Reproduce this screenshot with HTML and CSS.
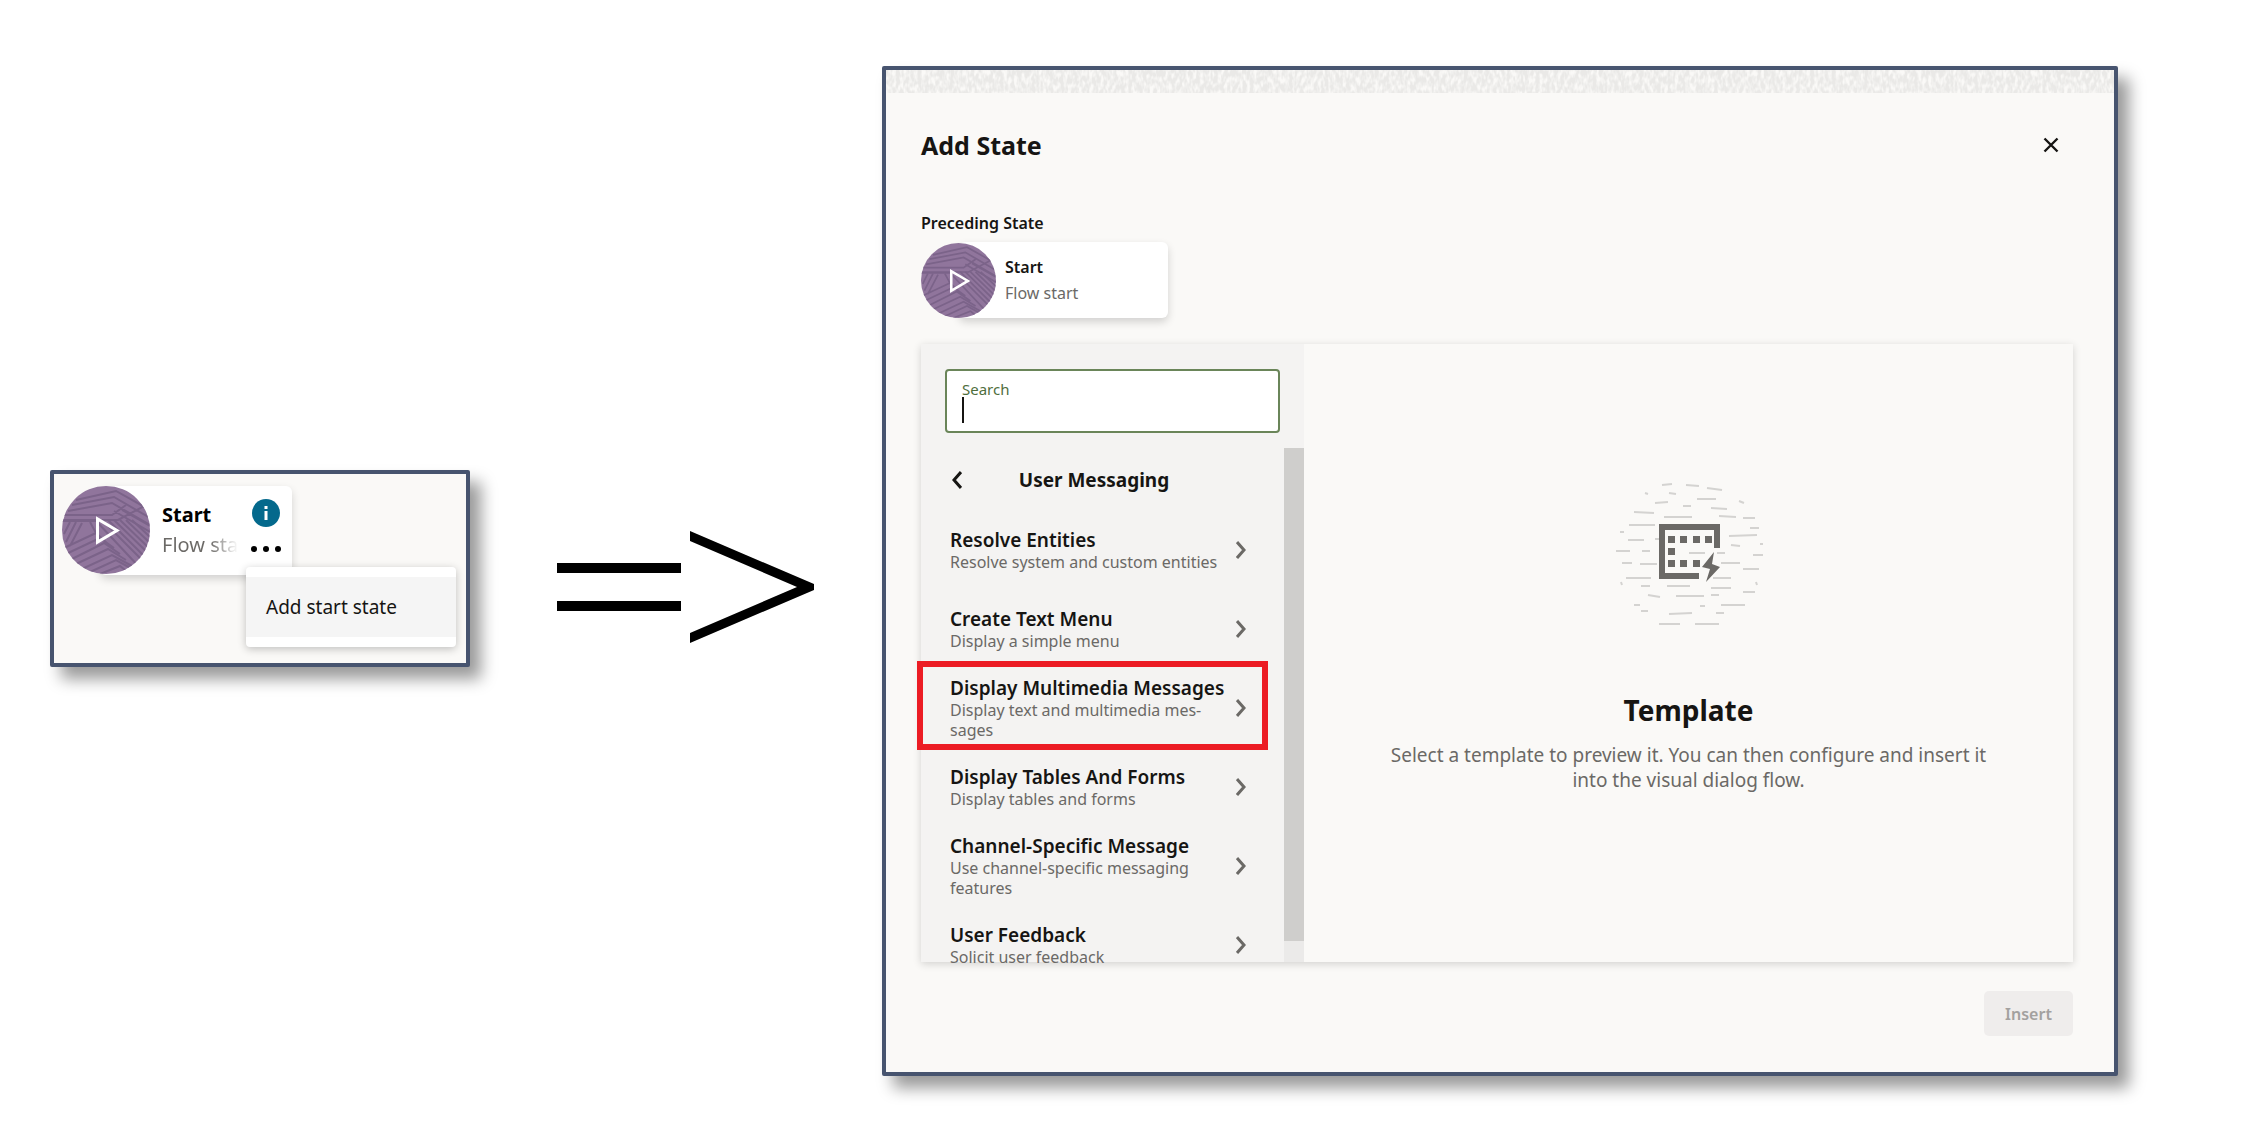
FILE: index.html
```html
<!DOCTYPE html>
<html lang="en">
<head>
<meta charset="utf-8">
<meta name="viewport" content="width=device-width, initial-scale=1">
<title>Add State</title>
<link rel="stylesheet" href="styles.css">
</head>
<body>
<svg class="defs" aria-hidden="true">
  <defs>
    <symbol id="start-icon" viewBox="0 0 88 88">
      <clipPath id="disc"><circle cx="44" cy="44" r="44"/></clipPath>
      <g clip-path="url(#disc)">
        <rect width="88" height="88" fill="#90759c"/>
        <g fill="none" stroke="#7b6389" stroke-width="2">
          <path d="M14 14L54 5L88 24M10 19L52 11L88 32M6 25L50 17L88 39M2 29H50L64 19M0 34H56L88 17M52 25L88 46M60 24L88 40"/>
          <path d="M40 34L88 82M46 34L88 76M52 34L88 69M58 34L88 63M64 34L88 57M70 34L88 51M36 37L80 84M0 35H40"/>
          <path d="M8 36L2 48M14 36L4 56M20 37L8 60M28 36L34 47M2 62L34 47L46 58M4 68L38 52L52 62M8 74L42 57L58 68M14 78L46 63L64 74M20 83L50 69L70 80M28 86L54 74L74 85M38 88L58 80L68 88"/>
        </g>
        <path d="M35.500 33V56L55 44.500Z" fill="none" stroke="#fff" stroke-width="3"/>
      </g>
    </symbol>
    <symbol id="chevron" viewBox="0 0 10 18">
      <path d="M1 1L8 9L1 17" fill="none" stroke="currentColor" stroke-width="3"/>
    </symbol>
  </defs>
</svg>

<main class="page">
  <section class="canvas frame" aria-label="Flow canvas">
    <article class="node node-large">
      <svg class="node-icon" aria-hidden="true"><use href="#start-icon"/></svg>
      <div class="node-text">
        <strong>Start</strong>
        <span class="fade">Flow start</span>
      </div>
      <div class="node-actions">
        <button class="icon-button" aria-label="Information">
          <svg width="28" height="28" viewBox="0 0 28 28"><circle cx="14" cy="14" r="14" fill="#04698c"/><path d="M12.500 7h3v3h-3zM12.500 12h3v9h-3z" fill="#fff"/></svg>
        </button>
        <button class="icon-button" aria-label="Menu">
          <svg width="30" height="8" viewBox="0 0 30 8"><circle cx="3" cy="4" r="3"/><circle cx="15" cy="4" r="3"/><circle cx="27" cy="4" r="3"/></svg>
        </button>
      </div>
    </article>
    <div class="menu" role="menu">
      <button class="menu-item" role="menuitem">Add start state</button>
    </div>
  </section>

  <svg class="arrow" viewBox="0 0 257 112" aria-hidden="true">
    <path d="M0 32H124V42H0ZM0 70H124V80H0ZM133 0L257 53V59L133 112V102L240 56L133 10Z"/>
  </svg>

  <section class="dialog frame" role="dialog" aria-labelledby="dialog-title">
    <svg class="texture" aria-hidden="true">
      <filter id="grain" x="0" y="0" width="100%" height="100%">
        <feTurbulence type="fractalNoise" baseFrequency="0.280 0.140" numOctaves="2" seed="4"/>
        <feColorMatrix values="0 0 0 0 0.820  0 0 0 0 0.815  0 0 0 0 0.800  3 0 0 0 -0.850"/>
      </filter>
      <rect width="100%" height="100%" filter="url(#grain)"/>
    </svg>
    <header class="dialog-header">
      <h1 id="dialog-title">Add State</h1>
      <button class="icon-button close" aria-label="Close">
        <svg width="16" height="16" viewBox="0 0 16 16"><path d="M1.500 1.500L14.500 14.500M14.500 1.500L1.500 14.500" fill="none" stroke="#161513" stroke-width="2.400"/></svg>
      </button>
    </header>
    <h2 class="preceding">Preceding State</h2>
    <article class="node">
      <svg class="node-icon" aria-hidden="true"><use href="#start-icon"/></svg>
      <div class="node-text">
        <strong>Start</strong>
        <span>Flow start</span>
      </div>
    </article>

    <div class="picker">
      <div class="templates">
        <div class="search">
          <label for="search">Search</label>
          <div class="search-line"><span class="caret"></span><input id="search" type="text"></div>
        </div>
        <div class="scroller">
          <nav class="list" aria-label="User Messaging">
            <div class="list-header">
              <button class="icon-button back" aria-label="Back"><svg class="chevron flip"><use href="#chevron"/></svg></button>
              <h3>User Messaging</h3>
            </div>
            <button class="item"><span class="item-text"><b>Resolve Entities</b><span>Resolve system and custom entities</span></span><svg class="chevron"><use href="#chevron"/></svg></button>
            <button class="item"><span class="item-text"><b>Create Text Menu</b><span>Display a simple menu</span></span><svg class="chevron"><use href="#chevron"/></svg></button>
            <button class="item highlighted"><span class="item-text"><b>Display Multimedia Messages</b><span>Display text and multimedia mes&shy;sages</span></span><svg class="chevron"><use href="#chevron"/></svg></button>
            <button class="item"><span class="item-text"><b>Display Tables And Forms</b><span>Display tables and forms</span></span><svg class="chevron"><use href="#chevron"/></svg></button>
            <button class="item"><span class="item-text"><b>Channel-Specific Message</b><span>Use channel-specific messaging features</span></span><svg class="chevron"><use href="#chevron"/></svg></button>
            <button class="item"><span class="item-text"><b>User Feedback</b><span>Solicit user feedback</span></span><svg class="chevron"><use href="#chevron"/></svg></button>
          </nav>
          <div class="scrollbar"><div class="thumb"></div></div>
        </div>
      </div>
      <div class="preview">
        <svg class="preview-icon" viewBox="0 0 150 144" aria-hidden="true">
          <g fill="none" stroke="#d4d3d1" stroke-width="2">
            <path d="M48 4l10-1M72 4l13 1M93 7l15 2M31 12l3 1M55 12l7 1M83 18h19M41 22l13-1M69 25h8M125 20l5 2M97 27l16 1M20 31l20 1M50 36h28M105 35l17 1M129 37h12M15 44h26M136 47h9M6 51h4M115 55l28-1M14 59h16M41 58h8M117 64l9 1M146 63h3M2 70h14M28 70h8M75 72h16M139 74h10M103 72h8M8 82h10M26 83h17M107 82h19M129 88h16M12 97h25M99 97h18M7 101l1 3M142 101l1 3M27 105h9M53 105h23M97 107h20M129 111h12M34 114l12 2M62 115h28M97 114h8M20 124h6M86 125h5M107 124h24M27 130h7M55 133l23-1M102 132h8M45 143h21M81 143h24"/>
          </g>
          <path d="M45 43H106V67H100V49H51V92H85V98H45Z" fill="#6b6966"/>
          <path d="M54 55h7v7h-7zM66 55h7v7h-7zM79 55h7v7h-7zM91 55h7v7h-7zM54 67h7v7h-7zM54 79h7v7h-7zM66 79h7v7h-7zM79 79h7v7h-7zM100 71L88 86L96 88L92 101L106 86L98 83Z" fill="#6b6966"/>
        </svg>
        <h2>Template</h2>
        <p>Select a template to preview it. You can then configure and insert it into the visual dialog flow.</p>
      </div>
    </div>
    <footer><button class="insert" disabled>Insert</button></footer>
  </section>
</main>
</body>
</html>
```
FILE: styles.css
```css
* { box-sizing: border-box; }

body {
  margin: 0;
  background: #fff;
  color: #161513;
  font-family: "Noto Sans", "Open Sans", sans-serif;
  font-size: 16px;
  line-height: 20px;
}

h1, h2, h3, p { margin: 0; }
button, input { font: inherit; color: inherit; border: 0; background: none; padding: 0; }
.defs { position: absolute; width: 0; height: 0; }

.page {
  display: flex;
  align-items: center;
  min-height: 100vh;
  padding: 66px 131px 54px 50px;
}

.frame {
  border: 4px solid #47546f;
  border-radius: 2px;
  background: #faf9f7;
  box-shadow: 11px 12px 16px rgba(0, 0, 0, 0.4);
}

.canvas {
  position: relative;
  flex: 0 0 420px;
  min-height: 197px;
  margin-bottom: 6px;
  padding: 12px 8px;
}

.arrow { flex: 0 0 257px; height: 112px; margin: 32px 68px 0 87px; }

.node {
  position: relative;
  display: flex;
  align-items: center;
  width: 247px;
  height: 76px;
  gap: 9px;
}
.node::before {
  content: "";
  position: absolute;
  inset: 0 0 0 38px;
  border-radius: 6px;
  background: #fff;
  box-shadow: 0 4px 8px rgba(0, 0, 0, 0.16);
}
.node > * { position: relative; }
.node-icon { flex: none; width: 75px; height: 75px; }
.node-text { display: grid; gap: 6px; }
.node-text strong { font-weight: 600; }
.node-text span { color: #6b6966; }

.node-large { width: 230px; height: 89px; gap: 12px; font-size: 20px; line-height: 24px; }
.node-large .node-icon { width: 88px; height: 88px; }
.node-large .node-text { flex: 1; min-width: 0; }
.node-large strong { color: #000; font-weight: 700; }
.node-large .fade {
  white-space: nowrap;
  background: linear-gradient(to right, #6b6966 48px, transparent 76px);
  background-clip: text;
  color: transparent;
}
.node-actions { display: grid; justify-items: center; gap: 18px; width: 30px; margin: 0 11px 8px 0; }
.icon-button { display: flex; }

.menu {
  position: absolute;
  top: 93px;
  right: 10px;
  width: 210px;
  padding: 10px 0;
  border-radius: 4px;
  background: #fff;
  box-shadow: 0 2px 8px rgba(0, 0, 0, 0.24);
}
.menu-item { width: 100%; height: 60px; padding: 0 20px; background: #f5f5f5; font-size: 19px; text-align: left; }

.dialog { flex: 1; min-width: 0; padding-bottom: 36px; }
.dialog > :not(.texture) { margin-left: 35px; margin-right: 41px; }
.texture { display: block; width: 100%; height: 23px; }
.dialog-header { display: flex; align-items: center; justify-content: space-between; height: 104px; }
.dialog-header h1 { font-size: 25px; line-height: 32px; }
.close { margin-right: 14px; }
.preceding { padding: 16px 0 9px; font-size: 16px; font-weight: 600; line-height: 20px; }

.picker {
  display: flex;
  height: 618px;
  margin-top: 26px;
  box-shadow: 0 2px 8px rgba(0, 0, 0, 0.16);
}
.templates { display: flex; flex-direction: column; flex: 0 0 383px; background: #f4f3f2; }
.search {
  height: 64px;
  margin: 25px 24px 15px 24px;
  padding: 10px 15px;
  border: 2px solid #6a8559;
  border-radius: 4px;
  background: #fff;
}
.search label { display: block; color: #4e6e3c; font-size: 15px; line-height: 16px; }
.search-line { display: flex; }
.search input { flex: 1; min-width: 0; height: 26px; outline: 0; }
.caret { width: 2px; height: 26px; background: #161513; }

.scroller { display: flex; flex: 1; min-height: 0; }
.list { flex: 1; margin: 0 0 -4px -4px; padding-left: 27px; overflow: hidden; }
.scrollbar { width: 20px; background: #ebeae9; }
.thumb { height: 96%; background: #cfcecc; }
.list-header { display: flex; align-items: center; height: 62px; padding-top: 2px; }
.list-header h3 { flex: 1; padding-right: 72px; font-size: 19px; text-align: center; }
.back { width: 32px; padding-left: 8px; }
.chevron { flex: none; width: 10px; height: 18px; }
.flip { transform: scaleX(-1); }

.item {
  display: flex;
  align-items: center;
  width: 324px;
  height: 79px;
  padding: 0 6px;
  text-align: left;
}
.item-text { flex: 1; display: grid; font-size: 16px; color: #6b6966; padding-right: 6px; }
.item-text b { color: #161513; font-size: 19px; font-weight: 600; line-height: 24px; white-space: nowrap; }
.item .chevron { color: #6b6966; margin-right: 16px; }
.highlighted { position: relative; }
.highlighted::after {
  content: "";
  position: absolute;
  inset: -7px 0 -3px -27px;
  border: 6px solid #ec1c24;
}

.preview { flex: 1; display: flex; flex-direction: column; align-items: center; padding-top: 137px; text-align: center; }
.preview-icon { width: 150px; height: 144px; }
.preview h2 { margin-top: 67px; font-size: 28px; line-height: 36px; }
.preview p { max-width: 640px; margin-top: 15px; padding: 0 10px; color: #6b6966; font-size: 19px; line-height: 25px; }

footer { display: flex; justify-content: flex-end; padding-top: 29px; }
.insert { width: 89px; height: 45px; border-radius: 5px; background: #efedec; color: #a3a19f; font-weight: 600; }
```
